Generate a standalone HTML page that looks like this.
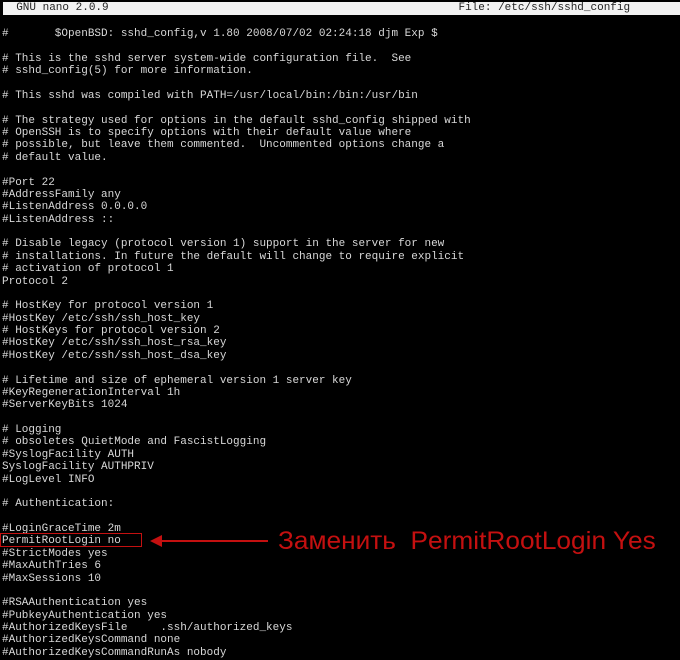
<!DOCTYPE html>
<html><head><meta charset="utf-8"><style>
html,body{margin:0;padding:0;background:#000;width:680px;height:660px;overflow:hidden;position:relative}
#hdr{position:absolute;left:3px;top:2px;width:677px;height:13px;background:#f2f2f2;font:11px/13px "Liberation Mono",monospace;color:#222;white-space:pre}
pre{position:absolute;left:2px;top:28px;margin:0;font:11px/12.38px "Liberation Mono",monospace;color:#d8d8d8;letter-spacing:0}
#box{position:absolute;left:0;top:533px;width:142px;height:14px;border:1px solid #c41010;box-sizing:border-box}
#line{position:absolute;left:160px;top:540px;width:108px;height:2px;background:#c41010}
#head{position:absolute;left:150px;top:535px;width:0;height:0;border-top:6px solid transparent;border-bottom:6px solid transparent;border-right:12px solid #c41010}
#lbl{position:absolute;left:278px;top:526px;font:25px/30px "Liberation Sans",sans-serif;color:#c41010;white-space:pre;transform:scaleX(1.05);transform-origin:0 0}
</style></head><body>
<div id="hdr">  GNU nano 2.0.9                                                     File: /etc/ssh/sshd_config</div>
<pre>#       $OpenBSD: sshd_config,v 1.80 2008/07/02 02:24:18 djm Exp $

# This is the sshd server system-wide configuration file.  See
# sshd_config(5) for more information.

# This sshd was compiled with PATH=/usr/local/bin:/bin:/usr/bin

# The strategy used for options in the default sshd_config shipped with
# OpenSSH is to specify options with their default value where
# possible, but leave them commented.  Uncommented options change a
# default value.

#Port 22
#AddressFamily any
#ListenAddress 0.0.0.0
#ListenAddress ::

# Disable legacy (protocol version 1) support in the server for new
# installations. In future the default will change to require explicit
# activation of protocol 1
Protocol 2

# HostKey for protocol version 1
#HostKey /etc/ssh/ssh_host_key
# HostKeys for protocol version 2
#HostKey /etc/ssh/ssh_host_rsa_key
#HostKey /etc/ssh/ssh_host_dsa_key

# Lifetime and size of ephemeral version 1 server key
#KeyRegenerationInterval 1h
#ServerKeyBits 1024

# Logging
# obsoletes QuietMode and FascistLogging
#SyslogFacility AUTH
SyslogFacility AUTHPRIV
#LogLevel INFO

# Authentication:

#LoginGraceTime 2m
PermitRootLogin no
#StrictModes yes
#MaxAuthTries 6
#MaxSessions 10

#RSAAuthentication yes
#PubkeyAuthentication yes
#AuthorizedKeysFile     .ssh/authorized_keys
#AuthorizedKeysCommand none
#AuthorizedKeysCommandRunAs nobody</pre>
<div id="box"></div><div id="line"></div><div id="head"></div>
<div id="lbl">Заменить  PermitRootLogin Yes</div>
</body></html>
